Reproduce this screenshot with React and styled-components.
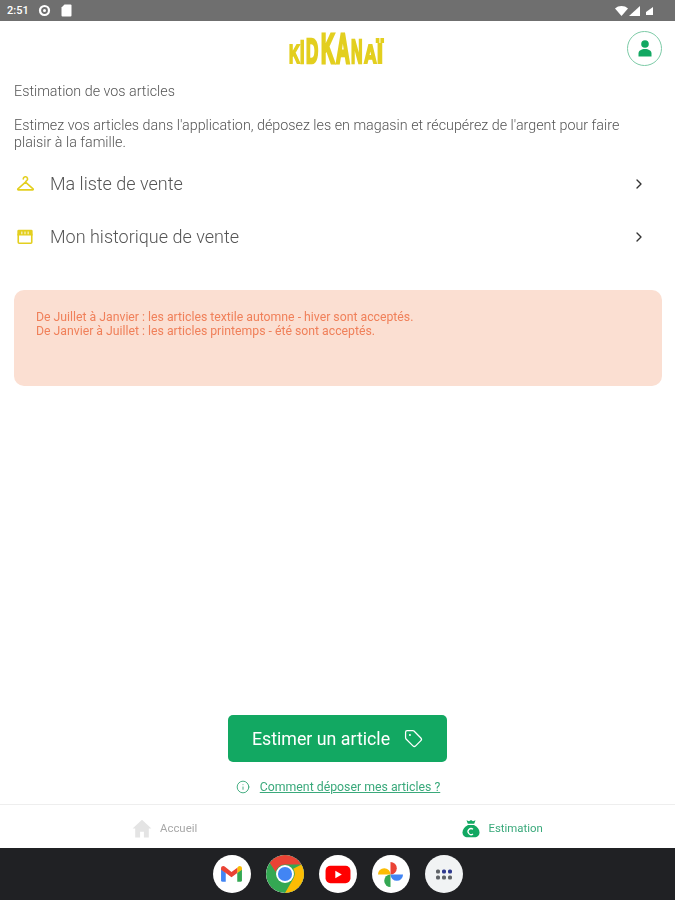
import React from 'react';
import styled, { createGlobalStyle } from 'styled-components';
import { ChevronRight, Tag, Info } from 'lucide-react';

const GlobalStyle = createGlobalStyle`
  html, body {
    margin: 0;
    padding: 0;
    background: #fff;
  }
  body {
    font-family: Roboto, "Liberation Sans", sans-serif;
  }
`;

const Page = styled.div`
  width: 675px;
  height: 900px;
  display: flex;
  flex-direction: column;
  overflow: hidden;
  filter: blur(0.4px);
`;

const StatusBar = styled.div`
  height: 21px;
  flex: none;
  background: #6f6f6f;
  display: flex;
  align-items: center;
  justify-content: space-between;
  padding: 0 22px 0 7px;
  color: #fff;
`;

const StatusGroup = styled.div`
  display: flex;
  align-items: center;
  gap: ${(p) => p.$gap || 6}px;
`;

const Clock = styled.span`
  font-size: 11px;
  font-weight: 500;
  margin-right: 2px;
`;

const Header = styled.header`
  height: 54px;
  flex: none;
  display: flex;
  align-items: center;
  justify-content: space-between;
  padding: 0 13px 0 289px;
`;

const Logo = styled.div`
  display: flex;
  align-items: flex-end;
  height: 32px;
  margin-top: 3px;
  font-family: "Liberation Sans", sans-serif;
  font-weight: 700;
  color: #e3cf1f;
`;

const LogoLetter = styled.span`
  display: block;
  width: ${(p) => p.$w}px;
  font-size: 20px;
  line-height: 1;
  transform-origin: left 85%;
  transform: scale(${(p) => p.$x}, ${(p) => p.$h});
  -webkit-text-stroke: 1.5px #e3cf1f;
`;

const ProfileButton = styled.div`
  width: 33px;
  height: 33px;
  border: 1px solid #7ccaa6;
  border-radius: 50%;
  display: flex;
  align-items: center;
  justify-content: center;
`;

const Main = styled.main`
  flex: 1;
  display: flex;
  flex-direction: column;
  padding: 0 13px 0 14px;
`;

const Paragraph = styled.p`
  margin: ${(p) => p.$top || 0}px 0 0;
  max-width: 630px;
  font-size: 14.3px;
  font-weight: 300;
  line-height: 17px;
  color: #555;
`;

const NavList = styled.nav`
  margin-top: 6px;
  display: flex;
  flex-direction: column;
`;

const NavRow = styled.div`
  height: 53px;
  display: flex;
  align-items: center;
  padding-right: 15px;
`;

const NavIcon = styled.span`
  width: 36px;
  flex: none;
  display: flex;
  padding-left: 2px;
  box-sizing: border-box;
`;

const NavLabel = styled.span`
  flex: 1;
  font-size: 18px;
  font-weight: 300;
  color: #555;
`;

const Alert = styled.div`
  margin-top: 27px;
  height: 96px;
  box-sizing: border-box;
  padding: 20px 22px;
  background: #fbdfd2;
  border-radius: 10px;
  color: #f0805a;
  font-size: 12.25px;
  line-height: 14px;
`;

const Actions = styled.div`
  margin-top: auto;
  display: flex;
  flex-direction: column;
  align-items: center;
  padding: 0 1px 10px 0;
`;

const EstimateButton = styled.button`
  width: 219px;
  height: 47px;
  border: 0;
  border-radius: 5px;
  background: #12a862;
  color: #fff;
  font-family: inherit;
  font-size: 17.8px;
  display: flex;
  align-items: center;
  justify-content: center;
  gap: 14px;
`;

const HelpRow = styled.div`
  margin: 18px 0 0 1px;
  display: flex;
  align-items: center;
  gap: 10px;
  color: #3aa97b;
  font-size: 12.3px;
`;

const HelpLink = styled.a`
  color: inherit;
  text-decoration: underline;
`;

const TabBar = styled.div`
  height: 43px;
  flex: none;
  border-top: 1px solid #eee;
  display: grid;
  grid-template-columns: 1fr 1fr;
`;

const Tab = styled.div`
  display: flex;
  align-items: center;
  padding: 3px 0 0 ${(p) => p.$pad}px;
  gap: ${(p) => p.$gap}px;
  font-size: 11.4px;
  color: ${(p) => (p.$active ? '#3aa97b' : '#a8a8a8')};
`;

const Dock = styled.div`
  height: 52px;
  flex: none;
  background: #202124;
  display: flex;
  align-items: center;
  justify-content: center;
  gap: 15px;
`;

const DockIcon = styled.div`
  width: 38px;
  height: 38px;
  border-radius: 50%;
  background: ${(p) => p.$bg || '#fff'};
  display: flex;
  align-items: center;
  justify-content: center;
  overflow: hidden;
`;

const logoLetters = [
  ['K', 11, 0.75, 1.3],
  ['I', 6, 0.8, 1.6],
  ['D', 15, 0.85, 1.8],
  ['K', 15, 0.95, 2.1],
  ['A', 15, 0.95, 2.1],
  ['N', 13, 0.8, 1.7],
  ['A', 13, 0.88, 1.3],
  ['Ï', 8, 1.05, 1.35],
];

const Person = () => (
  <svg width="14" height="17" viewBox="0 0 14 17" fill="#12a862">
    <circle cx="7" cy="4" r="3.800" />
    <path d="M0.500 16.500V13.500C.5 10.500 3.500 9 7 9s6.500 1.500 6.500 4.500v3z" />
  </svg>
);

const Hanger = () => (
  <svg width="19" height="17" viewBox="0 0 20 18" fill="none" stroke="#e3cf1f" strokeWidth="1.700" strokeLinecap="round" strokeLinejoin="round">
    <path d="M7.600 4.200a2.300 2.300 0 1 1 3.400 2L10 7.500 2 14.600c-.5.5-.2 1.200.5 1.200h15c.7 0 1-.7.5-1.200L10 7.500" />
  </svg>
);

const Store = () => (
  <svg width="18" height="17" viewBox="0 0 20 18" fill="none">
    <rect x="2.500" y="6" width="15" height="10.500" rx="1" stroke="#e3cf1f" strokeWidth="1.800" />
    <path d="M3 1.500h14a1.500 1.500 0 0 1 1.500 1.500v5H1.500V3A1.500 1.500 0 0 1 3 1.500z" fill="#e3cf1f" />
    <path d="M6.500 3.500v3M10 3.500v3M13.500 3.500v3" stroke="#fff" strokeWidth="1" />
  </svg>
);

const Home = () => (
  <svg width="20" height="19" viewBox="0 0 20 19" fill="#e4e4e4">
    <path d="M10 .8 0.600 9.600h2.600V18.400h4.900v-5.600h3.800v5.600h4.900V9.600h2.600z" />
  </svg>
);

const MoneyBag = () => (
  <svg width="18" height="19" viewBox="0 0 18 19">
    <path d="M4.500 1.200 7 2.300 9 1l2 1.300 2.500-1.100-1.300 3.600H5.800z" fill="#12a862" />
    <path d="M6 6h6c3.400 1.600 5.500 4.600 5.500 7.500 0 3-2.200 4.800-5 4.800H5.500c-2.800 0-5-1.800-5-4.800C.5 10.600 2.600 7.600 6 6z" fill="#12a862" />
    <path d="M11 10.300a3 3 0 1 0 0 4.600" fill="none" stroke="#fff" strokeWidth="1.300" />
  </svg>
);

const GmailIcon = () => (
  <svg width="23" height="18" viewBox="0 0 22 17">
    <path d="M1 3.500V14.500a1.500 1.500 0 0 0 1.500 1.500H5.500V7.500z" fill="#4285f4" />
    <path d="M21 3.500V14.500a1.500 1.500 0 0 1-1.500 1.500H16.500V7.500z" fill="#34a853" />
    <path d="M16.500 2.500V7.500L21 4.500V3C21 1 18.700.2 17.500 1.300z" fill="#fbbc04" />
    <path d="M1 3V4.500L5.500 7.500 11 11.500 16.500 7.500V2.500L11 6.500 4.500 1.300C3.300.2 1 1 1 3z" fill="#ea4335" />
  </svg>
);

const ChromeIcon = () => (
  <svg width="38" height="38" viewBox="0 0 36 36">
    <circle cx="18" cy="18" r="18" fill="#34a853" />
    <path d="M18 0a18 18 0 0 1 15.600 9H18a9 9 0 0 0-8.800 7L3.500 7.300A18 18 0 0 1 18 0z" fill="#ea4335" />
    <path d="M33.600 9A18 18 0 0 1 18 36l7.800-13.500A9 9 0 0 0 25.800 13z" fill="#fbbc04" />
    <circle cx="18" cy="18" r="8.500" fill="#fff" />
    <circle cx="18" cy="18" r="6.700" fill="#4285f4" />
  </svg>
);

const YoutubeIcon = () => (
  <svg width="26" height="19" viewBox="0 0 24 17">
    <rect x="0.500" y="0.500" width="23" height="16" rx="4.500" fill="#f00" />
    <path d="M9.500 5v7l6-3.500z" fill="#fff" />
  </svg>
);

const PhotosIcon = () => (
  <svg width="27" height="27" viewBox="0 0 28 28">
    <path d="M1 14a6.500 6.500 0 0 1 13 0z" fill="#fbbc04" />
    <path d="M14 1a6.500 6.500 0 0 1 0 13z" fill="#ea4335" />
    <path d="M14 14h13a6.500 6.500 0 0 1-13 0z" fill="#4285f4" />
    <path d="M14 27a6.500 6.500 0 0 1 0-13z" fill="#34a853" />
  </svg>
);

const AppsIcon = () => (
  <svg width="18" height="13" viewBox="0 0 18 13">
    {[0, 1].map((row) =>
      [0, 1, 2].map((col) => (
        <rect
          key={`${row}-${col}`}
          x={1 + col * 6}
          y={1.5 + row * 6}
          width="4"
          height="4"
          rx="1.500"
          fill={row === 0 && col > 0 ? '#2f3a8f' : '#5f6368'}
        />
      ))
    )}
  </svg>
);

const App = () => {
  return (
    <>
      <GlobalStyle />
      <Page>
        <StatusBar>
          <StatusGroup $gap={7}>
            <Clock>2:51</Clock>
            <svg width="13" height="13" viewBox="0 0 13 13">
              <circle cx="6.500" cy="6.500" r="4.500" fill="none" stroke="#fff" strokeWidth="2.200" />
              <circle cx="6.500" cy="6.500" r="1.500" fill="#fff" />
            </svg>
            <svg width="11" height="13" viewBox="0 0 11 13" style={{ marginLeft: 3 }}>
              <path d="M3.500.5H9.500A1 1 0 0 1 10.500 1.500V11.500A1 1 0 0 1 9.500 12.500H1.500A1 1 0 0 1 .5 11.500V3.500z" fill="#fff" />
            </svg>
          </StatusGroup>
          <StatusGroup $gap={6}>
            <StatusGroup $gap={1}>
              <svg width="13" height="10" viewBox="0 0 13 10">
                <path d="M0 2.500C3.500-.8 9.500-.8 13 2.500L6.500 10z" fill="#fff" />
              </svg>
              <svg width="11" height="10" viewBox="0 0 11 10">
                <path d="M11 0V10H0z" fill="#fff" />
              </svg>
            </StatusGroup>
            <svg width="7" height="8" viewBox="0 0 7 8">
              <path d="M7 0V8H0V5z" fill="#fff" />
            </svg>
          </StatusGroup>
        </StatusBar>

        <Header>
          <Logo>
            {logoLetters.map(([letter, width, scaleX, scaleY], i) => (
              <LogoLetter key={i} $w={width} $x={scaleX} $h={scaleY}>{letter}</LogoLetter>
            ))}
          </Logo>
          <ProfileButton>
            <Person />
          </ProfileButton>
        </Header>

        <Main>
          <Paragraph $top={8}>Estimation de vos articles</Paragraph>
          <Paragraph $top={17}>
            Estimez vos articles dans l'application, déposez les en magasin et récupérez de l'argent pour faire plaisir à la famille.
          </Paragraph>

          <NavList>
            <NavRow>
              <NavIcon><Hanger /></NavIcon>
              <NavLabel>Ma liste de vente</NavLabel>
              <ChevronRight size={16} color="#333" strokeWidth={2} />
            </NavRow>
            <NavRow>
              <NavIcon><Store /></NavIcon>
              <NavLabel>Mon historique de vente</NavLabel>
              <ChevronRight size={16} color="#333" strokeWidth={2} />
            </NavRow>
          </NavList>

          <Alert>
            De Juillet à Janvier : les articles textile automne - hiver sont acceptés.
            <br />
            De Janvier à Juillet : les articles printemps - été sont acceptés.
          </Alert>

          <Actions>
            <EstimateButton>
              Estimer un article
              <Tag size={19} strokeWidth={1.6} />
            </EstimateButton>
            <HelpRow>
              <Info size={14} strokeWidth={1.6} />
              <HelpLink>Comment déposer mes articles ?</HelpLink>
            </HelpRow>
          </Actions>
        </Main>

        <TabBar>
          <Tab $pad={132} $gap={8}>
            <Home />
            Accueil
          </Tab>
          <Tab $pad={124} $gap={9} $active>
            <MoneyBag />
            Estimation
          </Tab>
        </TabBar>

        <Dock>
          <DockIcon><GmailIcon /></DockIcon>
          <DockIcon><ChromeIcon /></DockIcon>
          <DockIcon><YoutubeIcon /></DockIcon>
          <DockIcon><PhotosIcon /></DockIcon>
          <DockIcon $bg="#f1f3f4"><AppsIcon /></DockIcon>
        </Dock>
      </Page>
    </>
  );
};

export default App;
